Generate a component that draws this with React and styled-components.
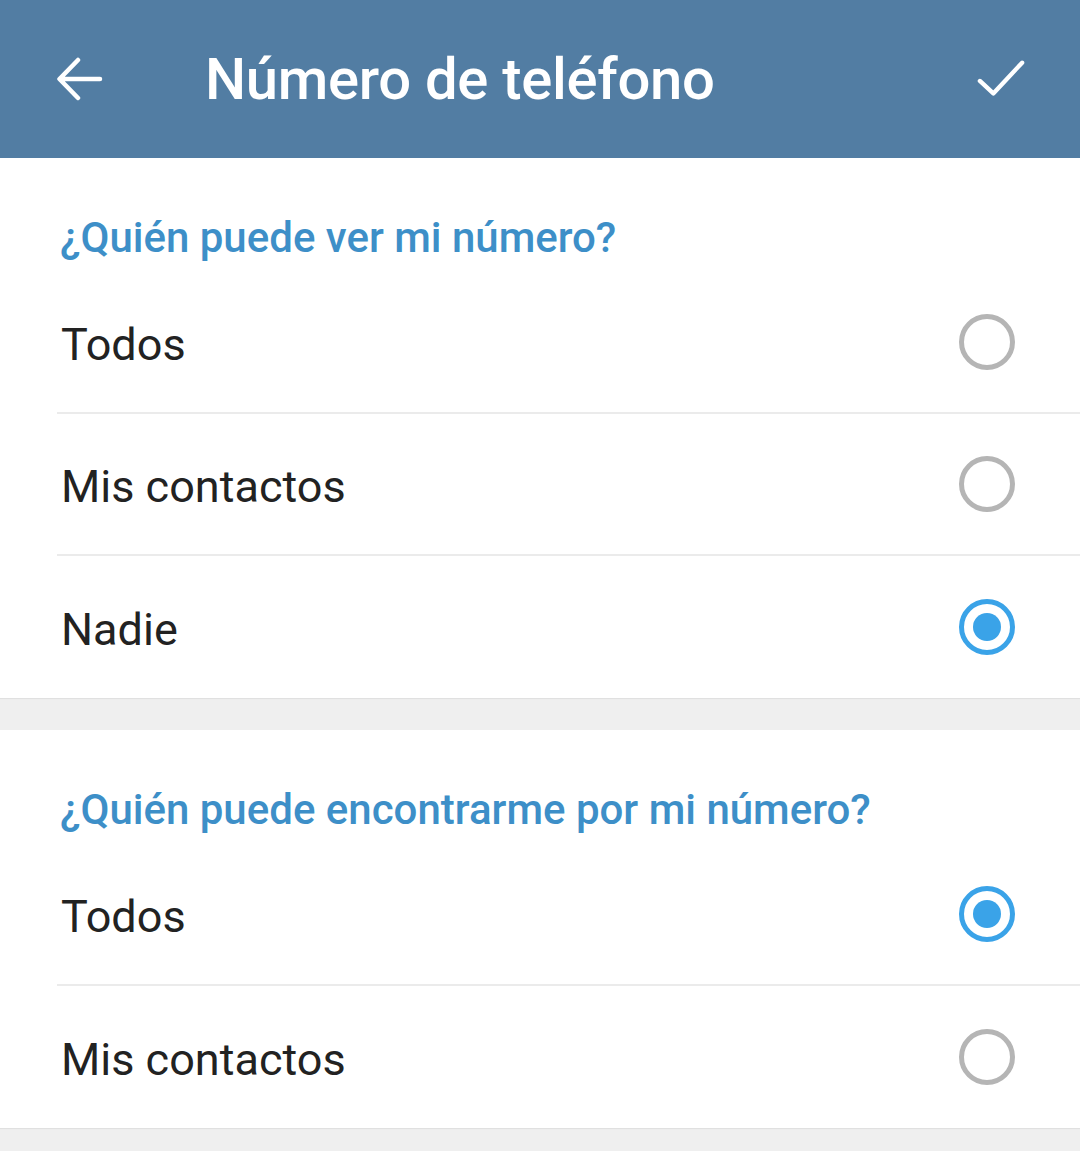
import React, { useState } from "react";
import styled, { createGlobalStyle } from "styled-components";

const GlobalStyle = createGlobalStyle`
  html, body {
    margin: 0;
    padding: 0;
    background: #efefef;
    font-family: Roboto, "Noto Sans", "Liberation Sans", sans-serif;
  }
`;

const Page = styled.div`
  width: 1080px;
  min-height: 1151px;
  background: #efefef;
`;

const TopBar = styled.div`
  display: flex;
  align-items: center;
  height: 158px;
  padding: 0 55px 0 57px;
  box-sizing: border-box;
  background: #527da3;
  color: white;
`;

const IconBtn = styled.div`
  display: flex;
  align-items: center;
  justify-content: center;
  width: 48px;
  height: 48px;
`;

const Title = styled.div`
  flex: 1;
  margin-left: 100px;
  font-size: 58px;
  font-weight: 500;
  letter-spacing: -0.3px;
`;

const Section = styled.div`
  background: white;
  margin-bottom: ${props => (props.gap ? "32px" : "0")};
  box-shadow: 0 1px 1px rgba(0, 0, 0, 0.06);
`;

const SectionHeader = styled.div`
  height: 114px;
  box-sizing: border-box;
  padding: 57px 0 0 60px;
  font-size: 42px;
  line-height: 46px;
  font-weight: 500;
  color: #3d8fc8;
`;

const Row = styled.div`
  display: flex;
  align-items: center;
  height: 142px;
  margin-left: 57px;
  padding-right: 65px;
  box-sizing: border-box;
  border-bottom: ${props => (props.last ? "none" : "2px solid #ebebeb")};
  cursor: pointer;
`;

const Label = styled.div`
  flex: 1;
  padding-left: 4px;
  padding-top: 4px;
  font-size: 45px;
  color: #222222;
`;

const Radio = styled.div`
  width: 56px;
  height: 56px;
  box-sizing: border-box;
  border-radius: 50%;
  border: 5px solid ${props => (props.checked ? "#3aa3e8" : "#b5b5b5")};
  display: flex;
  align-items: center;
  justify-content: center;
  &::after {
    content: "";
    display: ${props => (props.checked ? "block" : "none")};
    width: 28px;
    height: 28px;
    border-radius: 50%;
    background: #3aa3e8;
  }
`;

const BackIcon = () => (
  <svg width="48" height="48" viewBox="0 0 48 48" fill="none" stroke="white" strokeWidth="4.5" strokeLinecap="round" strokeLinejoin="round">
    <path d="M43 24H3M21 5L2.5 24L21 43" />
  </svg>
);

const CheckIcon = () => (
  <svg width="50" height="48" viewBox="0 0 50 48" fill="none" stroke="white" strokeWidth="4.5" strokeLinecap="round" strokeLinejoin="round">
    <path d="M3 26L17 39L47 7" />
  </svg>
);

const options = ["Todos", "Mis contactos", "Nadie"];

const App = () => {
  const [seeNumber, setSeeNumber] = useState("Nadie");
  const [findMe, setFindMe] = useState("Todos");

  return (
    <Page>
      <GlobalStyle />
      <TopBar>
        <IconBtn>
          <BackIcon />
        </IconBtn>
        <Title>Número de teléfono</Title>
        <IconBtn>
          <CheckIcon />
        </IconBtn>
      </TopBar>
      <Section gap>
        <SectionHeader>¿Quién puede ver mi número?</SectionHeader>
        {options.map((opt, index) => (
          <Row key={opt} last={index === options.length - 1} onClick={() => setSeeNumber(opt)}>
            <Label>{opt}</Label>
            <Radio checked={seeNumber === opt} />
          </Row>
        ))}
      </Section>
      <Section>
        <SectionHeader>¿Quién puede encontrarme por mi número?</SectionHeader>
        {options.slice(0, 2).map((opt, index) => (
          <Row key={opt} last={index === 1} onClick={() => setFindMe(opt)}>
            <Label>{opt}</Label>
            <Radio checked={findMe === opt} />
          </Row>
        ))}
      </Section>
    </Page>
  );
};

export default App;
